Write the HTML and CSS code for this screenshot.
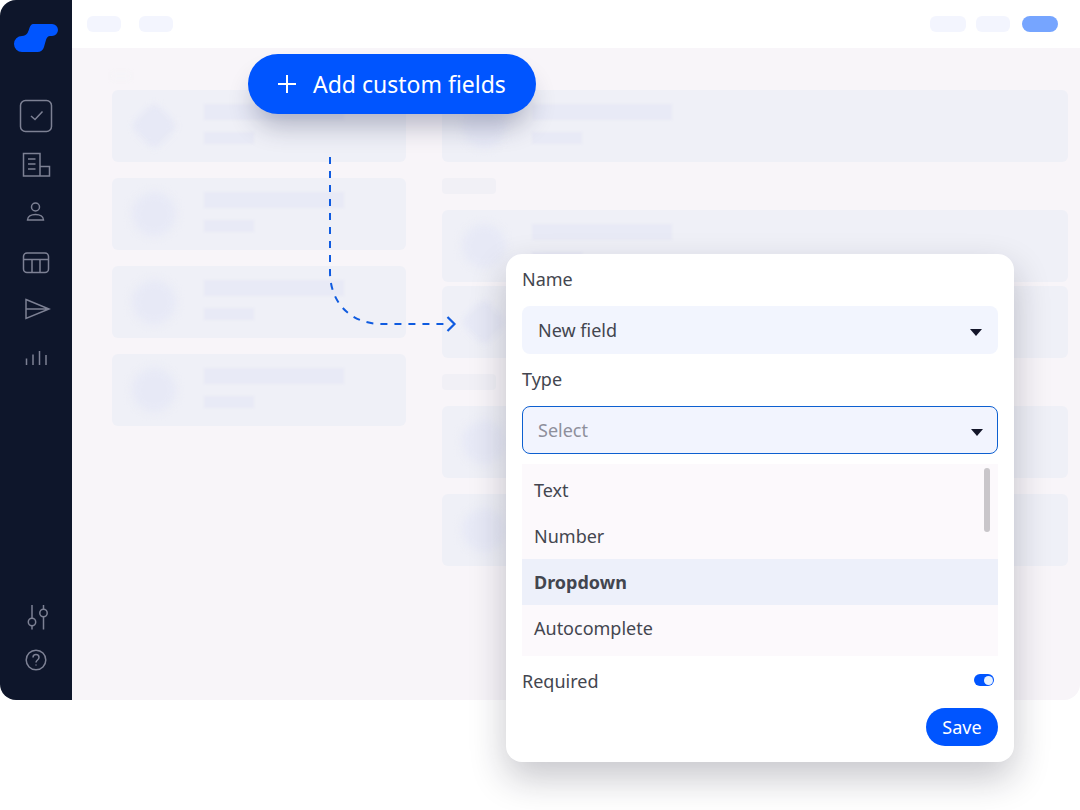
FILE: index.html
```html
<!DOCTYPE html>
<html lang="en">
<head>
<meta charset="utf-8">
<title>Add custom fields</title>
<link rel="stylesheet" href="styles.css">
</head>
<body>
<div class="stage">
  <div class="app">
    <aside class="sidebar">
      <svg class="logo" viewBox="0 12 72 48" aria-hidden="true"><path class="logo-shape" d="M34 24H52a6 6 0 0 1 0 12H50C46 36 46 41 44 47C43 50.500 40.500 52 37.500 52H22a8 8 0 0 1 0-16C27 36 28 32 29 29.500C30 26 31 24 34 24Z"/></svg>
      <nav class="nav">
        <svg class="nav-icon" viewBox="0 92 72 48"><rect x="20.500" y="100.500" width="31" height="31" rx="5"/><path d="M31 116l4 3.500 7.500-8"/></svg>
        <svg class="nav-icon" viewBox="0 140 72 48"><path d="M23.500 153.500h16.500v22.500h-16.500zM40 166.500h9.500v9.500H40M28 159h7.500M28 164h7.500M28 169h7.500"/></svg>
        <svg class="nav-icon" viewBox="0 188 72 48"><circle cx="35.500" cy="207" r="4"/><path d="M27.500 220c0-3.500 3.500-5.500 8-5.500s8 2 8 5.500z"/></svg>
        <svg class="nav-icon" viewBox="0 236 72 48"><rect x="23.500" y="253" width="25" height="19.500" rx="3.500"/><path d="M23.500 259.500h25M32 259.500v13M40 259.500v13"/></svg>
        <svg class="nav-icon" viewBox="0 284 72 48"><path d="M26 299.500l23 9.500-23 9.500zM26 309h23"/></svg>
        <svg class="nav-icon" viewBox="0 332 72 48"><path d="M26.500 358.500v6.500M33 354.500v10.500M39.500 351v14M46 355v10"/></svg>
      </nav>
      <div class="nav-bottom">
        <svg class="nav-icon-low" viewBox="0 596 72 44"><path d="M32 605v13M32 626v3.500M43.500 605v4M43.500 617v12.500"/><circle cx="32" cy="622" r="3.700"/><circle cx="43.500" cy="613" r="3.700"/></svg>
        <svg class="nav-icon-low" viewBox="0 640 72 44"><circle cx="36" cy="660" r="9.800"/><path d="M33 657.500c0-4 6-4 6 0 0 2.500-3 2.500-3 5M36 664.500v1"/></svg>
      </div>
    </aside>
    <div class="main">
      <header class="topbar">
        <div class="pill-group pill-group-left"><span class="pill"></span><span class="pill"></span></div>
        <div class="pill-group pill-group-right"><span class="pill pill-36"></span><span class="pill pill-34"></span><span class="pill pill-blue"></span></div>
      </header>
      <div class="content">
        <div class="blur-layer">
          <section class="col col-left">
            <div class="tiny"></div>
            <div class="card"><span class="avatar avatar-hex"></span><div class="lines"><span class="line"></span><span class="line line-sm"></span></div></div>
            <div class="card"><span class="avatar"></span><div class="lines"><span class="line"></span><span class="line line-sm"></span></div></div>
            <div class="card"><span class="avatar"></span><div class="lines"><span class="line"></span><span class="line line-sm"></span></div></div>
            <div class="card"><span class="avatar"></span><div class="lines"><span class="line"></span><span class="line line-sm"></span></div></div>
          </section>
          <section class="col col-right">
            <div class="card"><span class="avatar"></span><div class="lines"><span class="line"></span><span class="line line-sm"></span></div></div>
            <div class="label-bar"></div>
            <div class="card-pair">
              <div class="card"><span class="avatar"></span><div class="lines"><span class="line"></span><span class="line line-sm"></span></div></div>
              <div class="card"><span class="avatar avatar-hex"></span></div>
            </div>
            <div class="label-bar"></div>
            <div class="card"><span class="avatar"></span></div>
            <div class="card"><span class="avatar"></span></div>
          </section>
        </div>
      </div>
    </div>
  </div>

  <button class="add-btn" type="button"><svg class="plus" viewBox="0 0 18 18"><path d="M9 0v18M0 9h18"/></svg><span>Add custom fields</span></button>

  <svg class="connector" viewBox="0 0 140 190" aria-hidden="true">
    <path class="connector-line" d="M10 3V118C10 148 30 170 62 170H126"/>
    <path class="connector-head" d="M127.500 163l7 7-7 7"/>
  </svg>

  <form class="modal">
    <div class="field-label">Name</div>
    <div class="select"><span>New field</span><i class="caret"></i></div>
    <div class="field-label field-label-type">Type</div>
    <div class="select select-focus"><span class="placeholder">Select</span><i class="caret"></i></div>
    <div class="list">
      <div class="option">Text</div>
      <div class="option">Number</div>
      <div class="option option-active">Dropdown</div>
      <div class="option">Autocomplete</div>
      <span class="scrollbar"></span>
    </div>
    <div class="required-row"><span>Required</span><span class="toggle"><i class="knob"></i></span></div>
    <div class="actions"><button class="save" type="button">Save</button></div>
  </form>
</div>
</body>
</html>
```
FILE: styles.css
```css
* { box-sizing: border-box; }
html, body { margin: 0; padding: 0; background: #fff; }
body { font-family: "Noto Sans", "Open Sans", sans-serif; color: #43464f; overflow: hidden; }
.stage { position: relative; width: 1080px; height: 810px; overflow: hidden; background: #fff; }

.app { display: flex; width: 1080px; height: 700px; border-radius: 16px; overflow: hidden; }
.sidebar { width: 72px; flex: none; display: flex; flex-direction: column; background: #0e162b; }
.logo { display: block; width: 72px; height: 48px; margin-top: 12px; }
.logo-shape { fill: #0055ff; }
.nav { display: flex; flex-direction: column; margin-top: 32px; }
.nav-icon, .nav-icon-low { display: block; width: 72px; fill: none; stroke: #7d8194; stroke-width: 1.5; }
.nav-icon { height: 48px; }
.nav-icon-low { height: 44px; }
.nav-bottom { margin-top: auto; padding-bottom: 16px; }

.main { flex: 1; display: flex; flex-direction: column; min-width: 0; }
.topbar { height: 48px; flex: none; display: flex; justify-content: space-between; align-items: center; padding: 0 22px 0 15px; background: #fff; }
.pill-group { display: flex; }
.pill-group-left { gap: 18px; }
.pill-group-right { gap: 10px; }
.pill { display: block; width: 34px; height: 16px; border-radius: 6px; background: #f3f5fe; }
.pill-36 { width: 36px; }
.pill-34 { width: 34px; margin-right: 2px; }
.pill-blue { width: 36px; background: #76a5ff; border-radius: 8px; }

.content { flex: 1; background: #f8f5f9; padding: 42px 12px 0 40px; overflow: hidden; }
.blur-layer { display: flex; gap: 36px; }
.col { display: flex; flex-direction: column; gap: 16px; position: relative; }
.col-left { width: 294px; }
.col-right { flex: 1; }
.tiny { position: absolute; left: 0; top: -18px; width: 18px; height: 8px; background: #f6f4f8; filter: blur(2px); }
.card { display: flex; height: 72px; padding: 14px 0 0 20px; border-radius: 6px; background: #eff0f7; }
.card-pair { display: flex; flex-direction: column; gap: 4px; }
.avatar { display: block; width: 44px; height: 44px; flex: none; border-radius: 50%; background: #e7e9f6; filter: blur(4px); }
.avatar-hex { border-radius: 10px; transform: rotate(45deg) scale(.8); }
.lines { display: flex; flex-direction: column; gap: 12px; margin-left: 28px; filter: blur(1.2px); }
.line { display: block; width: 140px; height: 16px; background: #e8eaf6; }
.line-sm { width: 50px; height: 12px; }
.col-right .lines { margin-left: 26px; }
.label-bar { width: 54px; height: 16px; border-radius: 4px; background: #f1f0f6; }

.add-btn {
  position: absolute; left: 248px; top: 54px; width: 288px; height: 60px;
  display: flex; align-items: center; padding: 0 0 0 30px;
  border: 0; border-radius: 30px; background: #0055ff; color: #fff;
  font: 400 23px/1 "Noto Sans", sans-serif;
  box-shadow: 0 18px 26px -6px rgba(30, 35, 80, .3);
}
.plus { width: 18px; height: 18px; margin-right: 17px; fill: none; stroke: #fff; stroke-width: 2; }

.connector { position: absolute; left: 320px; top: 154px; width: 140px; height: 190px; fill: none; }
.connector-line { stroke: #0f5be0; stroke-width: 2; stroke-dasharray: 7 7; }
.connector-head { stroke: #0f5be0; stroke-width: 2.200; }

.modal {
  position: absolute; left: 506px; top: 254px; width: 508px; height: 508px;
  display: flex; flex-direction: column; padding: 11px 16px 16px;
  border-radius: 16px; background: #fff;
  box-shadow: 0 16px 36px rgba(20, 22, 40, .24);
  font-size: 18px; line-height: 28px;
}
.field-label { height: 28px; margin-bottom: 13px; }
.field-label-type { margin: 11px 0 13px; }
.select { position: relative; display: flex; align-items: center; flex: none; height: 48px; padding: 0 16px; border-radius: 8px; background: #f2f5fe; }
.select-focus { border: 1.500px solid #0d5fd0; padding-left: 15px; background: #f2f4fe; }
.placeholder { color: #8e8f9b; }
.caret { position: absolute; right: 16px; top: 50%; margin-top: -1px; width: 0; height: 0; border: 6px solid transparent; border-top: 7px solid #14162a; border-bottom: 0; }
.select-focus .caret { right: 14.500px; }
.list { position: relative; flex: none; height: 192px; margin-top: 10px; padding-top: 3px; background: #fcf9fc; }
.option { height: 46px; display: flex; align-items: center; padding: 0 12px; }
.option-active { background: #edf0fa; font-weight: 700; }
.scrollbar { position: absolute; right: 8px; top: 4px; width: 6px; height: 64px; border-radius: 3px; background: #c9c6ca; }
.required-row { display: flex; justify-content: space-between; align-items: center; height: 28px; margin-top: 11px; padding-right: 4px; }
.toggle { display: flex; justify-content: flex-end; align-items: center; width: 20px; height: 12px; padding: 0 1.500px; border-radius: 6px; background: #0055ff; margin-top: -2px; }
.knob { display: block; width: 9px; height: 9px; border-radius: 50%; background: #e8f2ff; }
.actions { display: flex; justify-content: flex-end; margin-top: 13px; }
.save { width: 72px; height: 38px; border: 0; border-radius: 19px; background: #0055ff; color: #fff; font: 400 18px/1 "Noto Sans", sans-serif; }
```
